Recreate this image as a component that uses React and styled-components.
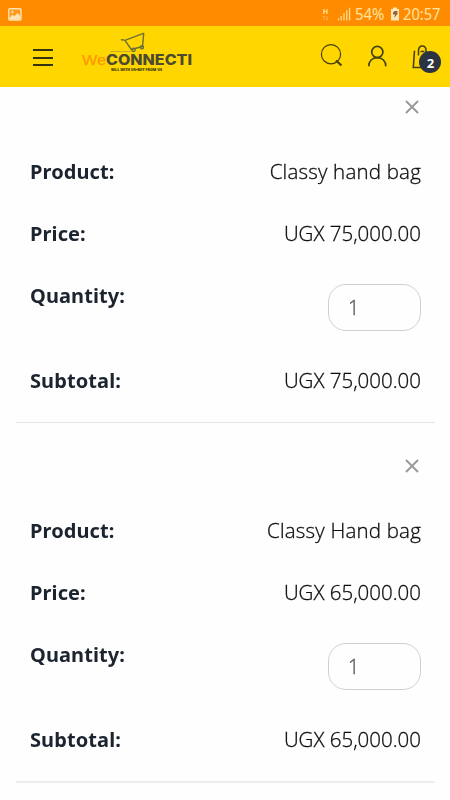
import React from "react";
import styled, { createGlobalStyle } from "styled-components";

const GlobalStyle = createGlobalStyle`
  * { box-sizing: border-box; }
  body { margin: 0; background: #fefefe; }
`;

const Page = styled.div`
  width: 450px;
  height: 800px;
  overflow: hidden;
  background: #fefefe;
  font-family: "Open Sans", "Noto Sans", sans-serif;
  color: #10141b;
`;

const StatusBar = styled.div`
  height: 26px;
  background: #ff8c00;
  color: #ffe3a0;
  display: flex;
  align-items: center;
  justify-content: space-between;
  padding: 2px 9px 0 8px;
`;

const StatusGroup = styled.div`
  display: flex;
  align-items: center;
`;

const StatusText = styled.svg`
  display: block;
  overflow: visible;
  margin-left: ${(p) => p.$gap}px;
  font-family: "Noto Sans", sans-serif;
  font-size: 16px;
  fill: #ffe3a0;
`;

const StatusIcon = styled.svg`
  display: block;
  margin-left: ${(p) => p.$gap || 0}px;
`;

const Header = styled.header`
  height: 61px;
  background: #ffd600;
  display: flex;
  align-items: flex-start;
  padding-left: 33px;
`;

const MenuButton = styled.div`
  width: 20px;
  height: 17px;
  margin-top: 23px;
  display: flex;
  flex-direction: column;
  justify-content: space-between;
`;

const MenuLine = styled.span`
  height: 2px;
  background: #33330f;
`;

const Logo = styled.svg`
  display: block;
  margin: 4px 0 0 27px;
  flex: none;
`;

const HeaderIcon = styled.svg`
  display: block;
  flex: none;
  margin-top: 16px;
  margin-left: ${(p) => p.$gap}px;
  fill: none;
  stroke: #45430f;
`;

const CartButton = styled.div`
  position: relative;
  width: 32px;
  height: 34px;
  margin: 16px 0 0 22px;
`;

const CartIcon = styled.svg`
  display: block;
  fill: none;
  stroke: #45430f;
`;

const CartBadge = styled.span`
  position: absolute;
  left: 10px;
  top: 9px;
  width: 22px;
  height: 22px;
  border-radius: 50%;
  background: #2b3440;
  color: #fff;
  font-size: 13px;
  font-weight: 700;
  line-height: 25px;
  padding-left: 1px;
  text-align: center;
`;

const Item = styled.section`
  margin: 0 15px 0 16px;
  padding: ${(p) => (p.$first ? 10 : 33)}px 14px 10px;
  border-bottom: ${(p) => (p.$last ? "2px solid #ededed" : "1px solid #e6e6e6")};
`;

const RemoveRow = styled.div`
  height: 20px;
  margin-bottom: 24px;
  display: flex;
  align-items: center;
  justify-content: flex-end;
  padding-right: 2px;
`;

const Row = styled.div`
  height: ${(p) => (p.$tall ? 85 : 62)}px;
  padding-top: ${(p) => (p.$tall ? 19 : 18)}px;
  display: flex;
  align-items: flex-start;
  justify-content: space-between;
  font-size: 20px;
  line-height: 26px;
  white-space: nowrap;
  will-change: transform;
`;

const Label = styled.span`
  font-family: "Noto Sans", "Open Sans", sans-serif;
  font-weight: 700;
  color: #1c2430;
  letter-spacing: 0.1px;
  margin-top: ${(p) => p.$shift || 0}px;
`;

const Value = styled.span`
  margin-top: -1px;
  font-size: 20.5px;
  font-weight: 300;
  color: #0c0c0e;
  -webkit-text-stroke: 0.3px #0c0c0e;
  letter-spacing: ${(p) => p.$spacing || 0}px;
`;

const Quantity = styled.div`
  width: 93px;
  height: 47px;
  border: 1px solid #cfcfcf;
  border-radius: 18px;
  padding-left: 19px;
  line-height: 45px;
  font-weight: 300;
  color: #555;
  -webkit-text-stroke: 0.3px #555;
`;

const items = [
  { name: "Classy hand bag", price: "UGX 75,000.00", quantity: 1 },
  { name: "Classy Hand bag", price: "UGX 65,000.00", quantity: 1 },
];

function CartLogo() {
  return (
    <Logo width="120" height="46" viewBox="80 30 120 46">
      <path d="M110.500 51.500H131" stroke="#b5a12c" strokeWidth=".8" />
      <g fill="none" stroke="#6b7038" strokeWidth="1.400" strokeLinejoin="round" strokeLinecap="round">
        <path d="M121.500 39.800l3.300.3 6.500 9.400 11.200-3 1.200-13-1 .2-16.500 6.200" />
        <circle cx="133.500" cy="49.800" r="1.700" />
        <circle cx="142" cy="47.200" r="1.500" />
      </g>
      <text x="82" y="65" fontFamily="Liberation Sans, sans-serif" fontSize="15.500" fill="#ff9800" stroke="#ff9800" strokeWidth=".25" textLength="24" lengthAdjust="spacingAndGlyphs">We</text>
      <text x="106" y="65" fontFamily="Inter, sans-serif" fontWeight="800" fontSize="14.500" fill="#4b4a32" textLength="86" lengthAdjust="spacingAndGlyphs">CONNECTI</text>
      <text x="111" y="71" fontFamily="Open Sans, sans-serif" fontWeight="800" fontSize="4.200" fill="#37340b" textLength="51" lengthAdjust="spacingAndGlyphs">SELL WITH US•BUY FROM US</text>
    </Logo>
  );
}

function Status() {
  return (
    <StatusBar>
      <StatusIcon width="14" height="13" viewBox="0 0 14 13">
        <rect x=".8" y=".8" width="12.200" height="11.200" rx="1" fill="#ff9818" stroke="#ffe3b0" strokeWidth="1.400" />
        <path d="M1.500 10L4.500 6.500 6.200 8.200 9.500 5 12.500 8.200V11.500H1.500Z" fill="#ffe3b0" />
        <circle cx="4.500" cy="4" r="1.200" fill="#ffe3b0" />
      </StatusIcon>
      <StatusGroup>
        <StatusIcon width="8" height="14" viewBox="0 0 8 14">
          <text x="1" y="6.500" fontFamily="Roboto, sans-serif" fontSize="7" fontWeight="700" fill="#ffe3a0">H</text>
          <path d="M2 13V9M1 10.200L2 9l1 1.200M5 9v4M4 11.800L5 13l1-1.200" stroke="#ffb85a" strokeWidth=".8" fill="none" />
        </StatusIcon>
        <StatusIcon $gap={7} width="14" height="14" viewBox="0 0 14 14">
          <path d="M1.500 13.500V11.500M4.200 13.500V9M7 13.500V6M9.800 13.500V3.200M12.600 13.500V.8" stroke="#ffdc92" strokeWidth="1.300" />
        </StatusIcon>
        <StatusText $gap={4} width="31" height="22">
          <text x="0" y="16.500" textLength="29.500" lengthAdjust="spacingAndGlyphs">54%</text>
        </StatusText>
        <StatusIcon $gap={4} width="10" height="14" viewBox="0 0 10 14">
          <path d="M3 .5h4v1.500h2v11.500H1V2h2Z" fill="#ffe8b8" />
          <path d="M3 5.500l1.500-1.500h3v3L4 11l1-3.500H3Z" fill="#98603d" />
        </StatusIcon>
        <StatusText $gap={3} width="38" height="22">
          <text x="0" y="16.500" textLength="37.500" lengthAdjust="spacingAndGlyphs">20:57</text>
        </StatusText>
      </StatusGroup>
    </StatusBar>
  );
}

function CartItem({ item, first, last }) {
  return (
    <Item $first={first} $last={last}>
      <RemoveRow>
        <svg width="14" height="14" viewBox="0 0 14 14">
          <path d="M1 1l12 12M13 1L1 13" stroke="#999" strokeWidth="1.900" />
        </svg>
      </RemoveRow>
      <Row>
        <Label>Product:</Label>
        <Value $spacing={0.2}>{item.name}</Value>
      </Row>
      <Row>
        <Label>Price:</Label>
        <Value>{item.price}</Value>
      </Row>
      <Row $tall>
        <Label $shift={-1}>Quantity:</Label>
        <Quantity>{item.quantity}</Quantity>
      </Row>
      <Row>
        <Label>Subtotal:</Label>
        <Value>{item.price}</Value>
      </Row>
    </Item>
  );
}

export default function App() {
  return (
    <Page>
      <GlobalStyle />
      <Status />
      <Header>
        <MenuButton>
          <MenuLine />
          <MenuLine />
          <MenuLine />
        </MenuButton>
        <CartLogo />
        <HeaderIcon $gap={120} width="22" height="28" viewBox="320 42 22 28">
          <circle cx="331" cy="54.200" r="9.600" strokeWidth="1.200" />
          <path d="M336 60.500l5.500 5" strokeWidth="2.200" />
        </HeaderIcon>
        <HeaderIcon $gap={25} width="20" height="28" viewBox="367 42 20 28">
          <circle cx="377.300" cy="52" r="5.600" strokeWidth="1.700" />
          <path d="M368.800 66.200c0-5 3.400-8.600 8.500-8.600s8.500 3.600 8.500 8.600" strokeWidth="1.700" />
        </HeaderIcon>
        <CartButton>
          <CartIcon width="32" height="30" viewBox="410 42 32 30">
            <path d="M415.500 50.800L414.300 67.500h14M419.500 55.500v-4.500c0-3.300 1.300-5 3.800-5s3.800 1.700 3.800 5V55.500M421.500 51.500h4" strokeWidth="1.600" />
          </CartIcon>
          <CartBadge>2</CartBadge>
        </CartButton>
      </Header>
      {items.map((item, i) => (
        <CartItem key={item.name} item={item} first={i === 0} last={i === items.length - 1} />
      ))}
    </Page>
  );
}
